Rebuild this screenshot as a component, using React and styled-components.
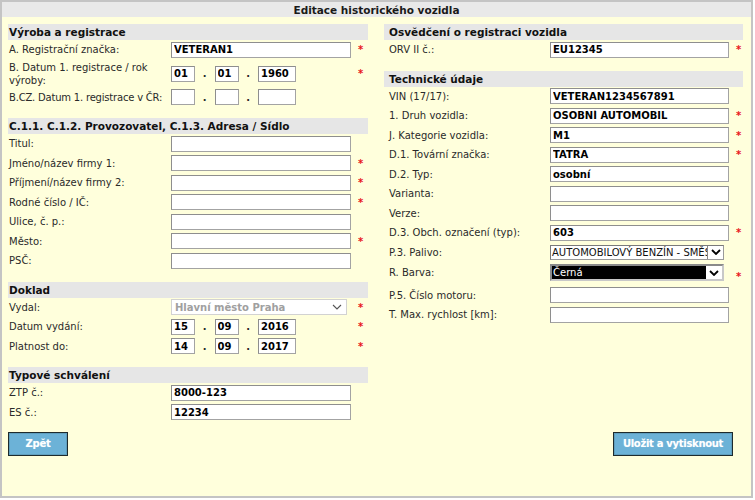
import React from "react";
import styled, { createGlobalStyle } from "styled-components";

const GlobalStyle = createGlobalStyle`
  html, body {
    margin: 0;
    padding: 0;
    background: #ffffff;
  }
  body {
    font-family: "DejaVu Sans", Verdana, sans-serif;
    font-size: 10px;
    color: #2a2a2a;
  }
  * {
    box-sizing: border-box;
  }
`;

const Frame = styled.div`
  width: 753px;
  height: 498px;
  border: 2px solid #c4c4c4;
  background: #ffffdc;
  display: flex;
  flex-direction: column;
`;

const TitleBar = styled.div`
  height: 15px;
  background: #e9e9e9;
  text-align: center;
  font-weight: bold;
  font-size: 10.5px;
  line-height: 16px;
  color: #1a1a1a;
`;

const Body = styled.div`
  padding: 7px 8px 0 6px;
  display: flex;
  flex-direction: column;
`;

const Columns = styled.div`
  display: grid;
  grid-template-columns: 360px 359px;
  column-gap: 16px;
  align-items: start;
`;

const Column = styled.div`
  display: flex;
  flex-direction: column;
`;

const Section = styled.div`
  margin-bottom: ${(p) => (p.$last ? 0 : 11)}px;
`;

const SectionTitle = styled.div`
  height: 16px;
  background: #e6e6e6;
  padding-left: ${(p) => p.$indent}px;
  font-weight: bold;
  font-size: 10.5px;
  line-height: 16px;
  color: #111;
`;

const Row = styled.div`
  display: flex;
  align-items: ${(p) => (p.$top ? "flex-start" : "center")};
  height: ${(p) => p.$h || 19.5}px;
  padding-left: ${(p) => p.$indent}px;
`;

const Label = styled.div`
  width: ${(p) => p.$w}px;
  flex: none;
  line-height: 13px;
  padding-right: 2px;
  white-space: ${(p) => (p.$nowrap ? "nowrap" : "normal")};
  letter-spacing: ${(p) => (p.$nowrap ? "-0.2px" : "0")};
`;

const Field = styled.div`
  width: ${(p) => p.$w}px;
  flex: none;
  display: flex;
  align-items: center;
`;

const TextInput = styled.input`
  width: ${(p) => p.$w || "100%"};
  height: 16px;
  margin: 0;
  padding: 0 2px;
  border: 1px solid #a3a3a3;
  border-top-color: #8e8e8e;
  border-left-color: #8e8e8e;
  background: #ffffff;
  font-family: "DejaVu Sans", Verdana, sans-serif;
  font-size: 10px;
  font-weight: bold;
  color: #000;
  outline: none;
`;

const Dot = styled.span`
  width: 19.5px;
  text-align: center;
  flex: none;
  font-weight: bold;
`;

const Star = styled.span`
  margin-left: 7px;
  color: #e8141b;
  font-size: 10px;
  font-weight: bold;
  line-height: 10px;
  align-self: center;
  margin-top: 1px;
`;

const DisabledSelect = styled.div`
  width: 176px;
  height: 16px;
  border: 1px solid #d2d2d2;
  background: #ffffff;
  display: flex;
  align-items: center;
  justify-content: space-between;
  padding: 0 4px 0 3px;
  color: #a0a0a0;
  font-weight: bold;
`;

const ClassicSelect = styled.div`
  width: 174px;
  height: ${(p) => (p.$dark ? 17 : 15)}px;
  margin-top: ${(p) => (p.$dark ? 2 : 0)}px;
  border: ${(p) => (p.$dark ? "2px solid #8a8a8a" : "1px solid #7a7a7a")};
  border-right-color: ${(p) => (p.$dark ? "#c8c8c8" : "#9a9a9a")};
  border-bottom-color: ${(p) => (p.$dark ? "#c8c8c8" : "#9a9a9a")};
  background: #ffffff;
  display: flex;
  align-items: stretch;
  overflow: hidden;
`;

const SelectValue = styled.div`
  flex: 1;
  min-width: 0;
  padding-left: 1px;
  white-space: nowrap;
  overflow: hidden;
  line-height: 13px;
  color: ${(p) => (p.$dark ? "#ffffff" : "#111")};
  background: ${(p) => (p.$dark ? "#000000" : "transparent")};
`;

const ArrowBox = styled.div`
  width: 16px;
  flex: none;
  display: flex;
  align-items: center;
  justify-content: center;
  background: #ffffff;
  border-left: 1px solid ${(p) => (p.$dark ? "#ffffff" : "#888")};
  border-right: ${(p) => (p.$dark ? "1px solid #fff" : "none")};
`;

const ButtonBar = styled.div`
  display: flex;
  justify-content: space-between;
  padding-right: 10px;
  margin-top: 9.5px;
`;

const Button = styled.button`
  width: ${(p) => p.$w}px;
  height: 24px;
  margin: 0;
  padding: 0;
  background: #6cb2d7;
  border: 1px solid #1e2b2d;
  box-shadow: inset 0 0 0 1px #5f9fbf;
  color: #ffffff;
  font-family: "DejaVu Sans", Verdana, sans-serif;
  font-size: 10px;
  font-weight: bold;
  letter-spacing: -0.3px;
  text-shadow: 0 0 1px rgba(255, 255, 255, 0.4);
  cursor: pointer;
`;

const Chevron = ({ bold }) => (
  <svg width="10" height="6" viewBox="0 0 10 6">
    <polyline
      points="1,1 5,5 9,1"
      fill="none"
      stroke={bold ? "#000" : "#555"}
      strokeWidth={bold ? 1.8 : 1.1}
    />
  </svg>
);

const L = { label: 162, field: 180, indent: 1 };
const R = { label: 161, field: 179, indent: 5 };

const TextRow = ({ side, label, value = "", req }) => (
  <Row $indent={side.indent}>
    <Label $w={side.label}>{label}</Label>
    <Field $w={side.field}>
      <TextInput readOnly value={value} />
    </Field>
    {req && <Star>*</Star>}
  </Row>
);

const DateRow = ({ side, label, d = "", m = "", y = "", req, h, nowrap }) => (
  <Row $indent={side.indent} $h={h}>
    <Label $w={side.label} $nowrap={nowrap}>
      {label}
    </Label>
    <Field $w={side.field}>
      <TextInput $w="24px" readOnly value={d} />
      <Dot>.</Dot>
      <TextInput $w="24px" readOnly value={m} />
      <Dot>.</Dot>
      <TextInput $w="38px" readOnly value={y} />
    </Field>
    {req && <Star>*</Star>}
  </Row>
);

const SelectRow = ({ label, value, dark, req, h }) => (
  <Row $indent={R.indent} $h={h} $top={dark}>
    <Label $w={R.label} style={dark ? { marginTop: 4 } : undefined}>
      {label}
    </Label>
    <Field $w={R.field}>
      <ClassicSelect $dark={dark}>
        <SelectValue $dark={dark}>{value}</SelectValue>
        <ArrowBox $dark={dark}>
          <Chevron bold />
        </ArrowBox>
      </ClassicSelect>
    </Field>
    {req && <Star style={dark ? { marginTop: 7 } : undefined}>*</Star>}
  </Row>
);

export default function App() {
  return (
    <>
      <GlobalStyle />
      <Frame>
        <TitleBar>Editace historického vozidla</TitleBar>
        <Body>
          <Columns>
            <Column>
              <Section>
                <SectionTitle $indent={1}>Výroba a registrace</SectionTitle>
                <TextRow side={L} label="A. Registrační značka:" value="VETERAN1" req />
                <DateRow
                  side={L}
                  h={28}
                  label="B. Datum 1. registrace / rok výroby:"
                  d="01"
                  m="01"
                  y="1960"
                  req
                />
                <DateRow side={L} nowrap label="B.CZ. Datum 1. registrace v ČR:" />
              </Section>
              <Section>
                <SectionTitle $indent={1}>
                  C.1.1. C.1.2. Provozovatel, C.1.3. Adresa / Sídlo
                </SectionTitle>
                <TextRow side={L} label="Titul:" />
                <TextRow side={L} label="Jméno/název firmy 1:" req />
                <TextRow side={L} label="Příjmení/název firmy 2:" req />
                <TextRow side={L} label="Rodné číslo / IČ:" req />
                <TextRow side={L} label="Ulice, č. p.:" />
                <TextRow side={L} label="Město:" req />
                <TextRow side={L} label="PSČ:" />
              </Section>
              <Section>
                <SectionTitle $indent={1}>Doklad</SectionTitle>
                <Row $indent={L.indent}>
                  <Label $w={L.label}>Vydal:</Label>
                  <Field $w={L.field}>
                    <DisabledSelect>
                      <span>Hlavní město Praha</span>
                      <Chevron />
                    </DisabledSelect>
                  </Field>
                  <Star>*</Star>
                </Row>
                <DateRow side={L} label="Datum vydání:" d="15" m="09" y="2016" req />
                <DateRow side={L} label="Platnost do:" d="14" m="09" y="2017" req />
              </Section>
              <Section $last>
                <SectionTitle $indent={1}>Typové schválení</SectionTitle>
                <TextRow side={L} label="ZTP č.:" value="8000-123" />
                <TextRow side={L} label="ES č.:" value="12234" />
              </Section>
            </Column>

            <Column>
              <Section>
                <SectionTitle $indent={5}>Osvědčení o registraci vozidla</SectionTitle>
                <TextRow side={R} label="ORV II č.:" value="EU12345" req />
              </Section>
              <Section $last>
                <SectionTitle $indent={5}>Technické údaje</SectionTitle>
                <TextRow side={R} label="VIN (17/17):" value="VETERAN1234567891" />
                <TextRow side={R} label="1. Druh vozidla:" value="OSOBNÍ AUTOMOBIL" req />
                <TextRow side={R} label="J. Kategorie vozidla:" value="M1" req />
                <TextRow side={R} label="D.1. Tovární značka:" value="TATRA" req />
                <TextRow side={R} label="D.2. Typ:" value="osobní" />
                <TextRow side={R} label="Varianta:" />
                <TextRow side={R} label="Verze:" />
                <TextRow side={R} label="D.3. Obch. označení (typ):" value="603" req />
                <SelectRow label="P.3. Palivo:" value="AUTOMOBILOVÝ BENZÍN - SMĚS" />
                <SelectRow label="R. Barva:" value="Černá" dark req h={23.5} />
                <TextRow side={R} label="P.5. Číslo motoru:" />
                <TextRow side={R} label="T. Max. rychlost [km]:" />
              </Section>
            </Column>
          </Columns>

          <ButtonBar>
            <Button $w={60}>Zpět</Button>
            <Button $w={120}>Uložit a vytisknout</Button>
          </ButtonBar>
        </Body>
      </Frame>
    </>
  );
}
